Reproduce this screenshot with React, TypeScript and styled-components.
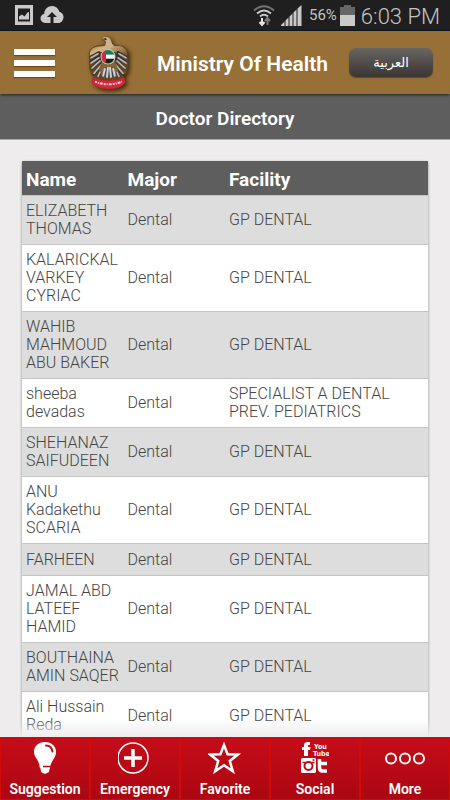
import React from "react";
import styled, { createGlobalStyle } from "styled-components";

const GlobalStyle = createGlobalStyle`
  *, *::before, *::after { box-sizing: border-box; }
  body {
    margin: 0;
    background: #eeeced;
    font-family: Roboto, "Noto Sans", sans-serif;
  }
`;

const Screen = styled.div`
  display: flex;
  flex-direction: column;
  height: 100vh;
  overflow: hidden;
`;

const StatusBar = styled.div`
  display: flex;
  flex: none;
  align-items: center;
  justify-content: space-between;
  height: 31px;
  padding: 0 10px 0 14px;
  background: #1f1f1f;
  border-bottom: 1px solid #0c1420;
  color: #c4c4c4;
`;

const StatusGroup = styled.div`
  display: flex;
  align-items: center;
  gap: 6px;
  svg { display: block; }
`;

const BatteryLevel = styled.span`
  margin: 0 -3px 0 1px;
  font-size: 15px;
`;

const Clock = styled.time`
  font-size: 22px;
  font-weight: 300;
  line-height: 30px;
  padding-top: 3px;
`;

const AppBar = styled.header`
  position: relative;
  z-index: 1;
  display: flex;
  flex: none;
  align-items: center;
  height: 63px;
  padding: 0 17px 0 14px;
  background: #967037;
  border-radius: 0 0 2px 2px;
  box-shadow: 0 1px 3px #222;
`;

const MenuButton = styled.button`
  display: flex;
  flex-direction: column;
  gap: 5px;
  width: 41px;
  padding: 0;
  border: 0;
  background: none;
  span {
    height: 6px;
    background: #fff;
    box-shadow: 0 1px 1px #70480f;
  }
`;

const EmblemBox = styled.div`
  width: 48px;
  margin-left: 33px;
  svg { display: block; filter: drop-shadow(2px 2px 2px #3d2a10); }
`;

const AppTitle = styled.h1`
  flex: 1;
  margin: 0 0 0 4px;
  padding-top: 3px;
  color: #fff;
  font-size: 21px;
  font-weight: 600;
  line-height: 28px;
  text-align: center;
  white-space: nowrap;
`;

const LanguageButton = styled.button`
  width: 84px;
  height: 29px;
  margin-left: 4px;
  padding: 0;
  border: 0;
  border-radius: 7px;
  background: linear-gradient(#686563, #3b3532);
  box-shadow: 0 1px 1px #5b4728;
  color: #fff;
  font-family: "DejaVu Sans", sans-serif;
  font-size: 13px;
`;

const SectionBar = styled.h2`
  flex: none;
  margin: 0;
  height: 46px;
  border-bottom: 1px solid #a9a9a9;
  background: #5e5e5e;
  color: #fff;
  font-size: 19px;
  font-weight: 600;
  line-height: 49px;
  text-align: center;
`;

const Content = styled.main`
  position: relative;
  flex: 1;
  min-height: 0;
  overflow: hidden;
  padding: 21px 21px 0;
`;

const BottomFade = styled.div`
  position: absolute;
  inset: auto 0 0;
  height: 18px;
  background: linear-gradient(rgba(238, 236, 237, 0), #eeeced);
`;

const DirectoryTable = styled.table`
  width: 100%;
  table-layout: fixed;
  border-collapse: separate;
  border-spacing: 0;
  border: 1px solid #c8c8c8;
  border-top: 0;
  border-bottom: 0;
  border-radius: 4px;
  box-shadow: 0 0 2px #bbb;
  color: #444;
`;

const HeadCell = styled.th<{ $width: string }>`
  width: ${(p) => p.$width};
  height: 34px;
  padding: 3px 4px 0;
  background: #5e5e5e;
  color: #fff;
  font-size: 19px;
  font-weight: 700;
  line-height: 24px;
  text-align: left;
`;

const Row = styled.tr`
  background: #fff;
  &:nth-child(odd) { background: #ddd; }
`;

const Cell = styled.td`
  height: 32px;
  padding: 6px 0 6px 4px;
  border-top: 1px solid #c4c4c4;
  font-size: 16px;
  font-weight: 300;
  line-height: 18px;
  vertical-align: middle;
`;

const TabBar = styled.nav`
  display: grid;
  flex: none;
  grid-template-columns: repeat(5, 1fr);
  height: 63px;
  border-bottom: 1px solid #d40a05;
  background: linear-gradient(#c60c19, #ab0712);
`;

const Tab = styled.a`
  display: flex;
  flex-direction: column;
  align-items: center;
  justify-content: space-between;
  padding: 4px 0 1px;
  border-left: 1px solid #d40a05;
  border-right: 1px solid #d40a05;
  color: #fff;
  font-size: 14px;
  font-weight: 600;
  line-height: 18px;
  text-decoration: none;
  svg { display: block; }
`;

const PictureIcon = () => (
  <svg width="20" height="22" viewBox="0 0 20 22" aria-hidden="true">
    <path d="M1 1h18v20H1zM4 4.500v13h12v-13z" fill="#c9c9c9" fillRule="evenodd" />
    <path d="M5 15.500v-3l3-2 2.500 2 3-4 1.500-.5v7.500z" fill="#c9c9c9" />
  </svg>
);

const CloudIcon = () => (
  <svg width="24" height="20" viewBox="0 0 24 20" aria-hidden="true">
    <path d="M5 18C2.500 18 .5 16 .5 13.300c0-2.300 1.500-4 3.700-4.600C4.500 4 8 1 12 1c3.500 0 6.500 2.400 7.300 5.700 2.600.5 4.200 2.700 4.200 5.300 0 3.300-2.200 6-5.200 6z" fill="#c9c9c9" />
    <path d="M12 7l5 5h-3.500v6h-3v-6H7z" fill="#1f1f1f" />
  </svg>
);

const WifiIcon = () => (
  <svg width="22" height="23" viewBox="0 0 22 23" aria-hidden="true" fill="none" strokeWidth="2">
    <path d="M1 6.500Q11-2 21 6.500" stroke="#747474" />
    <path d="M4 9.500Q11 3.500 18 9.500M7 12.500Q11 9 15 12.500" stroke="#c9c9c9" />
    <path d="M9 14V20M6.500 18L9 21l2.500-3" stroke="#e5e5e5" />
    <path d="M14.500 21v-6M12 17l2.500-3 2.500 3" stroke="#777" />
  </svg>
);

const SignalIcon = () => (
  <svg width="21" height="21" viewBox="0 0 21 21" aria-hidden="true" fill="#c9c9c9">
    <path d="M0 21v-1l3.500-3.500V21zM4.500 21v-5.500L7.500 12.500V21zM8.500 21v-9.500l3-3V21zM12.500 21V7.500l3-3V21zM16.500 21V3.500L20.500 0v21z" />
  </svg>
);

const BatteryIcon = () => (
  <svg width="15" height="21" viewBox="0 0 15 21" aria-hidden="true">
    <path d="M0 2h4V0h7v2h4v8H0z" fill="#666" />
    <path d="M0 10h15v11H0z" fill="#cacaca" />
  </svg>
);

const Emblem = () => (
  <svg width="42" height="54" viewBox="0 0 42 52" preserveAspectRatio="none" role="img" aria-label="UAE emblem">
    <defs>
      <linearGradient id="wing" x1="0" y1="0" x2="1" y2="1">
        <stop stopColor="#765026" /><stop offset=".45" stopColor="#d7b481" /><stop offset="1" stopColor="#684621" />
      </linearGradient>
      <clipPath id="flag"><circle cx="20" cy="20" r="6.500" /></clipPath>
    </defs>
    <path d="M16 8c-5 1-8 1-12 4-3 2-3 4-3 7v9c0 4 1 8 5 12l8 5h13l8-5c4-4 5-8 5-13v-9c0-4-1-5-5-7-3-2-7-2-10-3z" fill="#69461d" />
    <path d="M17 9C13 10 8 9 4 12c-3 2-3 6-2 9l11-5 7-2 7 2 12 5c2-4 0-8-3-10-4-3-8-1-11-2-2-1-1-4-3-6-3-4-6-2-8 1 3-1 5 1 3 5z" fill="url(#wing)" stroke="#4c3216" strokeWidth=".7" />
    <path d="M14 3c2-3 6-3 8 0 2 2 1 5 4 6l-5 4-4-4c2-3 1-5-3-6z" fill="#ceb28c" />
    <path d="M14 3l5 1-1-2z" fill="#292623" />
    <g fill="none" strokeLinecap="round">
      <path d="M3 20l8-4M3 25l9-6M4 31l9-9M6 37l9-12M10 39l6-12M38 20l-8-4M38 25l-9-6M37 31l-9-9M35 37l-9-12M31 39l-6-12" stroke="#333" strokeWidth="3" />
      <path d="M3 21l7-4M3 26l8-5M4 31l8-7M6 36l7-8M10 39l4-8M38 21l-7-4M38 26l-8-5M37 31l-8-7M35 36l-7-8M31 39l-4-8" stroke="#b8b7b5" strokeWidth="1.700" />
    </g>
    <path d="M14 24h13l3 8-4 8H15l-4-8z" fill="#85623a" />
    <path d="M17 30h8l4 10H13z" fill="#4a4a4a" />
    <path d="M17 31l-2 8M20 30l-1 10M22 30l1 10M25 31l2 8" stroke="#d1d2d5" strokeWidth="2" />
    <circle cx="20" cy="20" r="7.500" fill="#c6c5bb" />
    <g clipPath="url(#flag)">
      <path d="M13 13h14v5H13z" fill="#0b8057" /><path d="M13 18h14v4H13z" fill="#fff" /><path d="M13 22h14v6H13z" fill="#202020" /><path d="M13 13h5v15h-5z" fill="#df243b" />
    </g>
    <path d="M5 40q15 6 31 0l1 5q-4 6-16 6T4 45z" fill="#d22939" stroke="#b62031" strokeWidth=".7" />
    <path d="M7 44q14 5 27 0" fill="none" stroke="#f5cbd0" strokeWidth="2" strokeDasharray="2 1 1 1 3 1" />
  </svg>
);

const BulbIcon = () => (
  <svg width="24" height="34" viewBox="0 0 24 34" aria-hidden="true">
    <path d="M12 1C5 1 1 5.500 1 11c0 5 4 7 5 12h12c2-5 5-7 5-12C23 5.500 19 1 12 1z" fill="#fff" />
    <path d="M13 4.500c4 0 6 2.500 6.500 6" fill="none" stroke="#b50d17" strokeWidth="2" strokeLinecap="round" />
    <path d="M6 22h12l-1 5-1 3v1l-4 2-4-2v-1l-1-2z" fill="#fff" />
    <path d="M10 25.500h8" stroke="#b50d17" strokeWidth="1.500" />
    <path d="M5 28h3" stroke="#b50d17" />
  </svg>
);

const EmergencyIcon = () => (
  <svg width="34" height="34" viewBox="0 0 34 34" aria-hidden="true">
    <circle cx="15" cy="17" r="15" fill="none" stroke="#fff" strokeWidth="1.500" />
    <path d="M15 8v18M6 17h18" stroke="#fff" strokeWidth="3.500" />
  </svg>
);

const StarIcon = () => (
  <svg width="34" height="34" viewBox="0 0 34 34" aria-hidden="true">
    <path d="M16 4l3.600 9.200 10.200.4-8 6.400 3 10.200-8.800-6-8.800 6 3-10.200-8-6.400 10.200-.4z" fill="none" stroke="#fff" strokeWidth="2.500" />
  </svg>
);

const SocialIcon = () => (
  <svg width="28" height="34" viewBox="0 0 28 34" aria-hidden="true">
    <path d="M3 15V9H1V6h2V4c0-2 1.500-3 4-3h2v3H8C7 4 7 4.500 7 6h2.500L9 9H7v6z" fill="#fff" />
    <text x="13" y="8" fill="#fff" fontFamily="Liberation Sans Narrow, DejaVu Sans Condensed, sans-serif" fontSize="7" fontWeight="700">You</text>
    <text x="12" y="15" fill="#fff" fontFamily="Liberation Sans Narrow, DejaVu Sans Condensed, sans-serif" fontSize="7" fontWeight="700">Tube</text>
    <rect y="17" width="15" height="15" rx="1.500" fill="#fff" />
    <circle cx="7.500" cy="25" r="4" fill="#fff" stroke="#bb0d18" strokeWidth="2" />
    <path d="M1.500 21.500h3M10.500 21.500h3M11.500 19h2" stroke="#bb0d18" strokeWidth="1.500" />
    <path d="M18.500 18v8.500c0 2.500 1 3.500 3 3.500H26M17 22.500h9" fill="none" stroke="#fff" strokeWidth="3.500" />
  </svg>
);

const MoreIcon = () => (
  <svg width="40" height="34" viewBox="0 0 40 34" aria-hidden="true" fill="none" stroke="#fff" strokeWidth="2">
    <circle cx="6" cy="17.500" r="5" /><circle cx="20" cy="17.500" r="5" /><circle cx="34" cy="17.500" r="5" />
  </svg>
);

const doctors = [
  ["ELIZABETH THOMAS", "GP DENTAL"],
  ["KALARICKAL VARKEY CYRIAC", "GP DENTAL"],
  ["WAHIB MAHMOUD ABU BAKER", "GP DENTAL"],
  ["sheeba devadas", "SPECIALIST A DENTAL PREV. PEDIATRICS"],
  ["SHEHANAZ SAIFUDEEN", "GP DENTAL"],
  ["ANU Kadakethu SCARIA", "GP DENTAL"],
  ["FARHEEN", "GP DENTAL"],
  ["JAMAL ABD LATEEF HAMID", "GP DENTAL"],
  ["BOUTHAINA AMIN SAQER", "GP DENTAL"],
  ["Ali Hussain Reda", "GP DENTAL"],
];

const tabs = [
  { label: "Suggestion", Icon: BulbIcon },
  { label: "Emergency", Icon: EmergencyIcon },
  { label: "Favorite", Icon: StarIcon },
  { label: "Social", Icon: SocialIcon },
  { label: "More", Icon: MoreIcon },
];

export default function App() {
  return (
    <Screen>
      <GlobalStyle />
      <StatusBar>
        <StatusGroup><PictureIcon /><CloudIcon /></StatusGroup>
        <StatusGroup>
          <WifiIcon /><SignalIcon /><BatteryLevel>56%</BatteryLevel><BatteryIcon /><Clock>6:03 PM</Clock>
        </StatusGroup>
      </StatusBar>
      <AppBar>
        <MenuButton aria-label="Menu"><span /><span /><span /></MenuButton>
        <EmblemBox><Emblem /></EmblemBox>
        <AppTitle>Ministry Of Health</AppTitle>
        <LanguageButton lang="ar">العربية</LanguageButton>
      </AppBar>
      <SectionBar>Doctor Directory</SectionBar>
      <Content>
        <DirectoryTable>
          <thead>
            <tr>
              <HeadCell scope="col" $width="25%">Name</HeadCell>
              <HeadCell scope="col" $width="25%">Major</HeadCell>
              <HeadCell scope="col" $width="50%">Facility</HeadCell>
            </tr>
          </thead>
          <tbody>
            {doctors.map(([name, facility]) => (
              <Row key={name}>
                <Cell>{name}</Cell>
                <Cell>Dental</Cell>
                <Cell>{facility}</Cell>
              </Row>
            ))}
          </tbody>
        </DirectoryTable>
        <BottomFade />
      </Content>
      <TabBar>
        {tabs.map(({ label, Icon }) => (
          <Tab key={label} href={`#${label.toLowerCase()}`}><Icon />{label}</Tab>
        ))}
      </TabBar>
    </Screen>
  );
}
